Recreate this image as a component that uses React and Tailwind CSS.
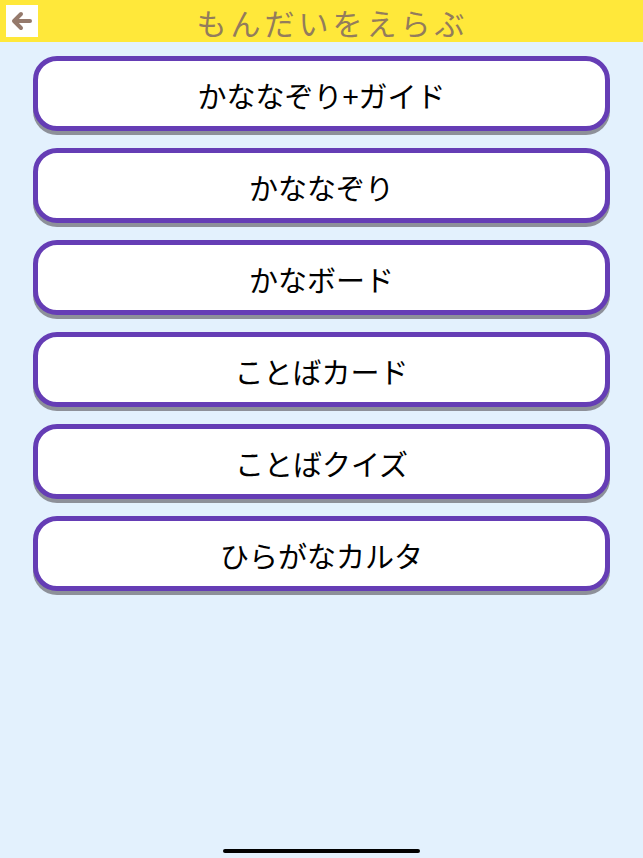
const items = ['かななぞり+ガイド', 'かななぞり', 'かなボード', 'ことばカード', 'ことばクイズ', 'ひらがなカルタ'];

export default function App() {
  return (
    <div
      className="relative w-[643px] h-[858px] bg-[#e3f1fd] overflow-hidden"
      style={{ fontFamily: '"Noto Sans CJK JP", "Noto Sans", sans-serif' }}
    >
      <header className="flex items-center h-[42px] bg-[#ffe83a] px-[6px]">
        <button className="w-[32px] h-[32px] bg-white flex items-center justify-center">
          <svg width="22" height="20" viewBox="0 0 22 20" fill="none" stroke="#957a6c" strokeWidth="4" strokeLinecap="round" strokeLinejoin="round">
            <path d="M19 10H4" />
            <path d="M10 3L3 10l7 7" />
          </svg>
        </button>
        <h1 className="flex-1 text-center text-[30px] leading-[36px] text-[#937c5c] pr-[10px] pt-[2px] tracking-[4px]">もんだいをえらぶ</h1>
      </header>

      <div className="flex flex-col items-center gap-[17px] pt-[14px]">
        {items.map((t) => (
          <button
            key={t}
            className="w-[577px] h-[75px] bg-white border-[5px] border-[#653db5] rounded-[24px] shadow-[0_4px_0_#8d9099] flex items-center justify-center pt-[4px] text-[29px] text-black"
          >
            {t}
          </button>
        ))}
      </div>

      <div className="absolute left-[223px] bottom-[5px] w-[197px] h-[4px] rounded-full bg-black" />
    </div>
  );
}
